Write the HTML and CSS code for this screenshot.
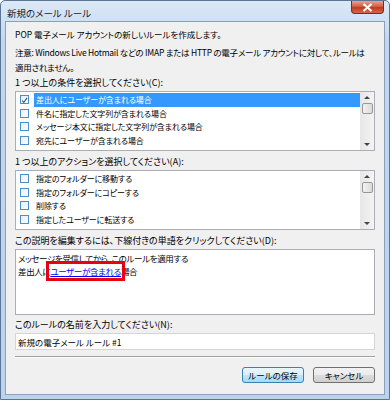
FILE: index.html
```html
<!DOCTYPE html>
<html lang="ja">
  <head>
    <meta charset="UTF-8" />
    <title>新規のメール ルール</title>
    <link rel="stylesheet" href="styles.css">
  </head>
  <body>
    <div class="window">
      <div class="titlebar">
        <span class="title">新規のメール ルール</span>
        <span class="close">
          <svg width="11" height="9" viewBox="0 0 11 9">
            <path d="M1.5 1 L9.5 8 M9.5 1 L1.5 8" stroke="#fff" stroke-width="2.2" />
          </svg>
        </span>
      </div>

      <div class="client">
        <p class="intro">POP 電子メール アカウントの新しいルールを作成します。</p>
        <p class="note">注意: Windows Live Hotmail などの IMAP または HTTP の電子メール アカウントに対して、ルールは<br>適用されません。</p>

        <!-- 条件 -->
        <div class="label">1 つ以上の条件を選択してください(C):</div>
        <div class="listbox">
          <div class="items">
            <div class="row selected"><span class="check checked"><svg width="9" height="9" viewBox="0 0 9 9"><path d="M1.5 4.5 L3.6 7 L7.8 1.2" fill="none" stroke="#2a4f78" stroke-width="1.4" /></svg></span><span class="text">差出人にユーザーが含まれる場合</span></div>
            <div class="row"><span class="check"></span><span class="text">件名に指定した文字列が含まれる場合</span></div>
            <div class="row"><span class="check"></span><span class="text">メッセージ本文に指定した文字列が含まれる場合</span></div>
            <div class="row"><span class="check"></span><span class="text">宛先にユーザーが含まれる場合</span></div>
          </div>
          <div class="scrollbar">
            <span class="arrow up"></span>
            <span class="thumb"></span>
            <span class="track"></span>
            <span class="arrow down"></span>
          </div>
        </div>

        <!-- アクション -->
        <div class="label">1 つ以上のアクションを選択してください(A):</div>
        <div class="listbox">
          <div class="items">
            <div class="row"><span class="check"></span><span class="text">指定のフォルダーに移動する</span></div>
            <div class="row"><span class="check"></span><span class="text">指定のフォルダーにコピーする</span></div>
            <div class="row"><span class="check"></span><span class="text">削除する</span></div>
            <div class="row"><span class="check"></span><span class="text">指定したユーザーに転送する</span></div>
          </div>
          <div class="scrollbar">
            <span class="arrow up"></span>
            <span class="thumb"></span>
            <span class="track"></span>
            <span class="arrow down"></span>
          </div>
        </div>

        <div class="label">この説明を編集するには、下線付きの単語をクリックしてください(D):</div>
        <div class="description">
          <div>メッセージを受信してから、このルールを適用する</div>
          <div>差出人に<a class="link" href="#">ユーザーが含まれる</a>場合</div>
        </div>

        <div class="label">このルールの名前を入力してください(N):</div>
        <input class="name" type="text" value="新規の電子メール ルール #1" />

        <div class="separator"></div>

        <div class="buttons">
          <button class="btn default">ルールの保存</button>
          <button class="btn">キャンセル</button>
        </div>
      </div>
    </div>
  </body>
</html>
```

FILE: styles.css
```css
body {
  margin: 0;
  padding: 0;
  font-family: "Noto Sans CJK JP", sans-serif;
  font-size: 8.5px;
  font-feature-settings: "palt";
  color: #000;
  background-color: #fff;
}

.window {
  width: 390px;
  height: 400px;
  box-sizing: border-box;
  border: 1px solid #5a7596;
  border-radius: 5px 5px 0 0;
  background: linear-gradient(to bottom, #dce9f6 0%, #c2d7ee 40px, #bcd3ec 100%);
  padding: 0 4px 4px 4px;
  display: flex;
  flex-direction: column;
}

.titlebar {
  height: 20px;
  display: flex;
  justify-content: space-between;
  align-items: flex-start;
}

.title {
  margin-top: 5px;
  margin-left: 2px;
  font-size: 9.5px;
  color: #1e1e1e;
}

.close {
  width: 33px;
  height: 13px;
  margin-right: 1px;
  border: 1px solid #7a2a1e;
  border-top: none;
  border-radius: 0 0 4px 4px;
  background: linear-gradient(to bottom, #e8a493 0%, #d0604a 45%, #bf3a22 55%, #d26a4e 100%);
  display: flex;
  align-items: center;
  justify-content: center;
  box-sizing: border-box;
}

.client {
  flex: 1;
  background-color: #f0f0f0;
  border: 1px solid #8aa0bd;
  padding: 5px 9px 0 9px;
  display: flex;
  flex-direction: column;
}

p {
  margin: 0;
}

.intro {
  line-height: 14px;
  margin-bottom: 4px;
}

.note {
  line-height: 15px;
  margin-bottom: 1px;
  white-space: nowrap;
  letter-spacing: -0.25px;
}

.label {
  font-size: 9px;
  line-height: 14px;
  margin-bottom: 1px;
}

.listbox {
  height: 60px;
  box-sizing: border-box;
  background-color: #fff;
  border: 1px solid #abadb3;
  display: flex;
  margin-bottom: 4px;
}

.items {
  flex: 1;
  padding-top: 1px;
}

.row {
  height: 13.6px;
  display: flex;
  align-items: center;
  font-size: 8px;
  letter-spacing: -0.1px;
}

.check {
  width: 9px;
  height: 9px;
  box-sizing: border-box;
  border: 1px solid #4d8fc7;
  background: linear-gradient(135deg, #e6eef6, #fff);
  margin: 0 5px 0 4px;
  display: flex;
}

.text {
  flex: 1;
  height: 100%;
  display: flex;
  align-items: center;
  padding-left: 2px;
}

.selected .text {
  background-color: #3399ff;
  color: #fff;
}

.scrollbar {
  width: 14px;
  background: linear-gradient(to right, #e6e6e6, #f4f4f4);
  display: flex;
  flex-direction: column;
  align-items: center;
}

.arrow {
  height: 11px;
  width: 100%;
  display: flex;
  align-items: center;
  justify-content: center;
}

.arrow::before {
  content: "";
  border-left: 3px solid transparent;
  border-right: 3px solid transparent;
}

.up::before {
  border-bottom: 3px solid #444;
}

.down::before {
  border-top: 3px solid #444;
}

.thumb {
  width: 11px;
  height: 11px;
  box-sizing: border-box;
  border: 1px solid #979797;
  border-radius: 2px;
  background: linear-gradient(to right, #f2f2f2, #dcdcdc);
}

.track {
  flex: 1;
}

.description {
  height: 66px;
  box-sizing: border-box;
  background-color: #fff;
  border: 1px solid #abadb3;
  padding: 2px 2px;
  line-height: 13px;
  margin-bottom: 3px;
  letter-spacing: -0.35px;
}

.link {
  color: #0000ff;
  text-decoration: underline;
  outline: 3px solid #e8000f;
  outline-offset: 1px;
}

.name {
  height: 17px;
  box-sizing: border-box;
  border: 1px solid #d5d5d5;
  background-color: #fff;
  font-family: inherit;
  font-size: 8.5px;
  font-feature-settings: "palt";
  padding: 0 2px;
  margin: 0;
}

.separator {
  border-top: 1px solid #a0a0a0;
  border-bottom: 1px solid #fff;
  margin-top: 6px;
}

.buttons {
  display: flex;
  justify-content: flex-end;
  gap: 9px;
  margin-top: 9px;
}

.btn {
  width: 62px;
  height: 16px;
  font-family: inherit;
  font-size: 8.5px;
  font-feature-settings: "palt";
  padding: 0;
  border: 1px solid #707070;
  border-radius: 3px;
  background: linear-gradient(to bottom, #f2f2f2 0%, #ebebeb 50%, #dddddd 51%, #cfcfcf 100%);
  color: #000;
}

.btn.default {
  border-color: #3c7fb1;
  background: linear-gradient(to bottom, #eaf6fd 0%, #d9f0fc 50%, #bee6fd 51%, #a7d9f5 100%);
}
```
